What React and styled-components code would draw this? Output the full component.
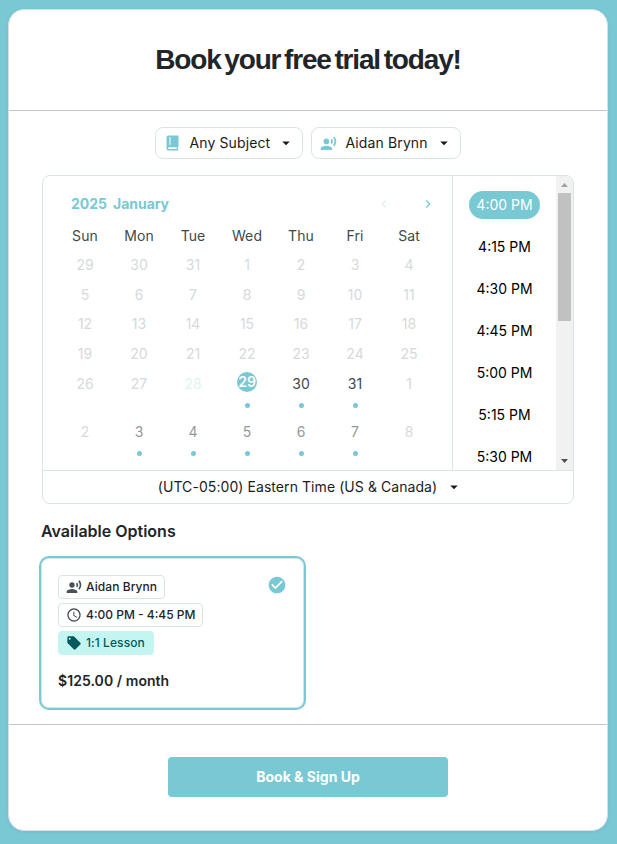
import { useState } from 'react';
import {
  MdAccessTime,
  MdArrowDropDown,
  MdCheckCircle,
  MdChevronLeft,
  MdChevronRight,
  MdLocalOffer,
  MdRecordVoiceOver,
} from 'react-icons/md';
import styled, { createGlobalStyle } from 'styled-components';

const GlobalStyle = createGlobalStyle`
  * {
    box-sizing: border-box;
  }
  body {
    margin: 0;
    background: #78c9d4;
    font-family: Inter, "Liberation Sans", sans-serif;
    color: #212529;
  }
  button {
    font-family: inherit;
    cursor: pointer;
  }
`;

const Page = styled.div`
  height: 844px;
  padding: 9px 9px 13px 8px;
`;

const Card = styled.main`
  display: flex;
  flex-direction: column;
  height: 822px;
  background: #fff;
  border: 1px solid #d9dfea;
  border-radius: 16px;
  box-shadow: 0 1px 3px rgba(110, 130, 210, 0.25);
`;

const Header = styled.header`
  display: flex;
  align-items: center;
  justify-content: center;
  height: 101px;
  border-bottom: 1px solid #c4c5d0;
`;

const Title = styled.h1`
  margin: 0;
  font-family: 'Liberation Sans', sans-serif;
  font-size: 28px;
  font-weight: 700;
  letter-spacing: -1.15px;
  word-spacing: -3px;
  line-height: 34px;
  white-space: nowrap;
`;

const Content = styled.section`
  display: flex;
  flex-direction: column;
  height: 614px;
  padding: 16px 33px 0;
  border-bottom: 1px solid #c4c5d0;
`;

const Filters = styled.div`
  display: flex;
  justify-content: center;
  gap: 8px;
  padding-right: 1px;
`;

const Filter = styled.button`
  display: flex;
  align-items: center;
  width: ${(props) => props.$width};
  height: 32px;
  padding: 0 7px 0 8px;
  background: #fff;
  border: 1px solid #dae4e3;
  border-radius: 8px;
  color: #191c1c;
  font-size: 14px;
  letter-spacing: 0.12px;
  white-space: nowrap;

  svg:first-child {
    width: 17px;
    margin-right: 9px;
    color: #78c9d4;
  }
  svg:last-child {
    margin-left: auto;
  }
`;

const FilterText = styled.span`
  padding-bottom: 2px;
`;

const Scheduler = styled.div`
  width: 532px;
  height: 329px;
  margin-top: 16px;
  border: 1px solid #dae4e3;
  border-radius: 8px;
  overflow: hidden;
`;

const Pickers = styled.div`
  display: flex;
  height: 295px;
  border-bottom: 1px solid #dae4e3;
`;

const Calendar = styled.div`
  width: 410px;
  padding: 14px 16px 0 15px;
  border-right: 1px solid #dae4e3;
`;

const MonthBar = styled.div`
  display: flex;
  align-items: center;
  height: 28px;
  padding: 0 0 0 13px;
  color: #78c9d4;
`;

const MonthLabel = styled.span`
  padding-bottom: 2px;
  font-size: 14px;
  font-weight: 700;
  letter-spacing: -0.05px;
  word-spacing: 3px;
`;

const Arrows = styled.div`
  display: flex;
  gap: 28px;
  margin-left: auto;
`;

const Arrow = styled.button`
  display: flex;
  padding: 0;
  background: none;
  border: none;
  color: #78c9d4;
  opacity: ${(props) => (props.disabled ? 0.25 : 1)};
`;

const Week = styled.div`
  display: grid;
  grid-template-columns: repeat(7, 54px);
  height: ${(props) => (props.$tall ? '48px' : '29.7px')};
`;

const WeekDays = styled(Week)`
  height: 32px;
  color: #3f4948;
  font-size: 14px;
  line-height: 35px;
  letter-spacing: 0.1px;
  text-align: center;
`;

const dayColors = {
  off: '#d6dada',
  today: '#dff3f6',
  open: '#3f4948',
  next: '#929998',
  selected: '#fff',
};

const Day = styled.div`
  display: flex;
  flex-direction: column;
  align-items: center;
  color: ${(props) => dayColors[props.$state]};
  font-size: 14px;
  line-height: 29.7px;
`;

const Selected = styled.span`
  width: 20px;
  height: 20px;
  margin: 3.2px 0 6px;
  border-radius: 50%;
  background: #78c9d4;
  font-weight: 600;
  line-height: 20px;
  text-align: center;
`;

const Dot = styled.span`
  width: 5px;
  height: 5px;
  margin-top: 4.8px;
  border-radius: 50%;
  background: #78c9d4;
`;

const Times = styled.div`
  display: flex;
  flex: 1;
  flex-direction: column;
  align-items: center;
  gap: 14px;
  padding-top: 15px;
  overflow: hidden;
`;

const Time = styled.button`
  flex: none;
  width: 71px;
  height: 28px;
  padding: 0 0 2px;
  border: none;
  border-radius: 14px;
  background: ${(props) => (props.$active ? '#78c9d4' : 'transparent')};
  color: ${(props) => (props.$active ? '#fff' : '#000')};
  font-size: 14px;
  white-space: nowrap;
`;

const ScrollBar = styled.div`
  display: flex;
  flex-direction: column;
  align-items: center;
  justify-content: space-between;
  width: 17px;
  background: #f1f1f1;
`;

const ScrollArrow = styled.svg`
  width: 17px;
  height: 17px;
  fill: ${(props) => props.$fill};
`;

const Thumb = styled.div`
  width: 13px;
  height: 128px;
  margin-bottom: auto;
  background: #c1c1c1;
`;

const Timezone = styled.div`
  display: flex;
  align-items: center;
  justify-content: center;
  gap: 8px;
  height: 32px;
  padding-left: 5px;
  color: #191c1c;
  font-size: 14px;
  letter-spacing: 0.07px;

  span {
    padding-bottom: 2px;
  }
`;

const SubTitle = styled.h2`
  margin: 16px 0 0 -1px;
  font-size: 16px;
  font-weight: 600;
  letter-spacing: 0;
  line-height: 22px;
`;

const Option = styled.div`
  display: flex;
  justify-content: space-between;
  width: 267px;
  height: 154px;
  margin: 14px 0 0 -3px;
  padding: 17px;
  border: 2px solid #78c9d4;
  border-radius: 10px;
  box-shadow: inset 0 0 0 1px #dae4e3;

  > svg {
    color: #78c9d4;
  }
`;

const Details = styled.div`
  display: flex;
  flex-direction: column;
  align-items: flex-start;
  gap: 4px;
`;

const Tag = styled.div`
  display: flex;
  align-items: center;
  gap: 4px;
  height: 24px;
  padding: 0 ${(props) => (props.$filled ? '8px' : '7px')} 0 7px;
  border: 1px solid ${(props) => (props.$filled ? '#c4f5f0' : '#dae4e3')};
  border-radius: 4px;
  background: ${(props) => (props.$filled ? '#c4f5f0' : '#fff')};
  color: ${(props) => (props.$filled ? '#00595c' : '#212529')};
  font-size: 12px;
  font-weight: 500;
  letter-spacing: ${(props) => props.$tracking || '0.08px'};
  white-space: nowrap;

  svg {
    color: ${(props) => (props.$filled ? '#00595c' : '#495057')};
  }
  span {
    padding-bottom: 2px;
  }
`;

const Price = styled.div`
  margin-top: 12px;
  font-size: 14px;
  font-weight: 600;
  letter-spacing: 0.06px;
  line-height: 20px;
`;

const Footer = styled.footer`
  display: flex;
  flex: 1;
  justify-content: center;
  padding-top: 32px;
`;

const SubmitButton = styled.button`
  width: 280px;
  height: 40px;
  padding: 0 0 2px;
  border: none;
  border-radius: 4px;
  background: #78c9d4;
  color: #fff;
  font-size: 14px;
  font-weight: 700;
`;

const weekDays = ['Sun', 'Mon', 'Tue', 'Wed', 'Thu', 'Fri', 'Sat'];

const weeks = [
  [29, 30, 31, 1, 2, 3, 4],
  [5, 6, 7, 8, 9, 10, 11],
  [12, 13, 14, 15, 16, 17, 18],
  [19, 20, 21, 22, 23, 24, 25],
  [26, 27, 28, 29, 30, 31, 1],
  [2, 3, 4, 5, 6, 7, 8],
];

const times = [
  '4:00 PM',
  '4:15 PM',
  '4:30 PM',
  '4:45 PM',
  '5:00 PM',
  '5:15 PM',
  '5:30 PM',
];

function dayState(week, index) {
  if (week === 4) {
    return ['off', 'off', 'today', 'selected', 'open', 'open', 'off'][index];
  }
  if (week === 5) return index === 0 || index === 6 ? 'off' : 'next';
  return 'off';
}

function BookIcon() {
  return (
    <svg width="16" height="16" viewBox="0 0 16 16">
      <path
        fill="currentColor"
        d="M4 .5h9.2c.5 0 .8.3.8.8v10.4c0 .4-.3.7-.7.7v1.8h.1a.6.6 0 0 1 0 1.3H4a2 2 0 0 1-2-2v-11a2 2 0 0 1 2-2z"
      />
      <path fill="#fff" d="M5 2h1v8H5zM4.3 12.3h7.8v1.6H4.3a.8.8 0 0 1 0-1.6z" />
    </svg>
  );
}

function CalendarDay({ day, state }) {
  const hasSlots = ['open', 'next', 'selected'].includes(state);

  return (
    <Day $state={state}>
      {state === 'selected' ? <Selected>{day}</Selected> : <span>{day}</span>}
      {hasSlots && <Dot />}
    </Day>
  );
}

function App() {
  const [time, setTime] = useState('4:00 PM');

  return (
    <Page>
      <GlobalStyle />
      <Card>
        <Header>
          <Title>Book your free trial today!</Title>
        </Header>
        <Content>
          <Filters>
            <Filter $width="148px">
              <BookIcon />
              <FilterText>Any Subject</FilterText>
              <MdArrowDropDown size={18} />
            </Filter>
            <Filter $width="150px">
              <MdRecordVoiceOver size={17} />
              <FilterText>Aidan Brynn</FilterText>
              <MdArrowDropDown size={18} />
            </Filter>
          </Filters>

          <Scheduler>
            <Pickers>
              <Calendar>
                <MonthBar>
                  <MonthLabel>2025 January</MonthLabel>
                  <Arrows>
                    <Arrow disabled>
                      <MdChevronLeft size={16} />
                    </Arrow>
                    <Arrow>
                      <MdChevronRight size={16} />
                    </Arrow>
                  </Arrows>
                </MonthBar>
                <WeekDays>
                  {weekDays.map((name) => (
                    <span key={name}>{name}</span>
                  ))}
                </WeekDays>
                {weeks.map((days, week) => (
                  <Week key={week} $tall={week > 3}>
                    {days.map((day, index) => (
                      <CalendarDay
                        key={index}
                        day={day}
                        state={dayState(week, index)}
                      />
                    ))}
                  </Week>
                ))}
              </Calendar>
              <Times>
                {times.map((item) => (
                  <Time
                    key={item}
                    $active={item === time}
                    onClick={() => setTime(item)}
                  >
                    {item}
                  </Time>
                ))}
              </Times>
              <ScrollBar>
                <ScrollArrow $fill="#a3a3a3" viewBox="0 0 17 17">
                  <path d="M5 11h7L8.500 7z" />
                </ScrollArrow>
                <Thumb />
                <ScrollArrow $fill="#505050" viewBox="0 0 17 17">
                  <path d="M5 6h7L8.500 10z" />
                </ScrollArrow>
              </ScrollBar>
            </Pickers>
            <Timezone>
              <span>(UTC-05:00) Eastern Time (US &amp; Canada)</span>
              <MdArrowDropDown size={18} />
            </Timezone>
          </Scheduler>

          <SubTitle>Available Options</SubTitle>
          <Option>
            <Details>
              <Tag>
                <MdRecordVoiceOver size={16} />
                <span>Aidan Brynn</span>
              </Tag>
              <Tag $tracking="0">
                <MdAccessTime size={16} />
                <span>4:00 PM - 4:45 PM</span>
              </Tag>
              <Tag $filled>
                <MdLocalOffer size={16} />
                <span>1:1 Lesson</span>
              </Tag>
              <Price>$125.00 / month</Price>
            </Details>
            <MdCheckCircle size={20} />
          </Option>
        </Content>
        <Footer>
          <SubmitButton>Book &amp; Sign Up</SubmitButton>
        </Footer>
      </Card>
    </Page>
  );
}

export default App;
